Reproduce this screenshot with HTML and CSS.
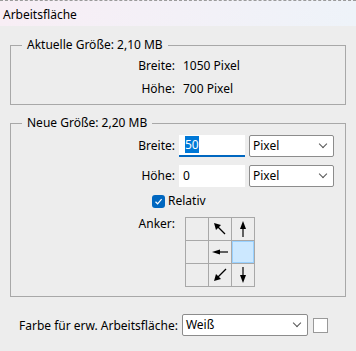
FILE: index.html
```html
<!DOCTYPE html>
<html lang="de">
<head>
	<meta charset="UTF-8">
	<title>Arbeitsfläche</title>
	<link rel="stylesheet" href="styles.css">
</head>
<body>
	<div class="titlebar">Arbeitsfläche</div>

	<div class="dialog">
		<fieldset class="groupe groupe-actuel">
			<legend>Aktuelle Größe: 2,10 MB</legend>
			<div class="lignes">
				<span class="label">Breite:</span>
				<span class="valeur">1050 Pixel</span>
				<span class="label">Höhe:</span>
				<span class="valeur">700 Pixel</span>
			</div>
		</fieldset>

		<fieldset class="groupe groupe-neu">
			<legend>Neue Größe: 2,20 MB</legend>
			<div class="lignes lignes-neu">
				<span class="label">Breite:</span>
				<div class="champs">
					<div class="saisie actif"><span class="selection">50</span></div>
					<div class="liste">Pixel<span class="chevron"></span></div>
				</div>
				<span class="label">Höhe:</span>
				<div class="champs">
					<div class="saisie">0</div>
					<div class="liste">Pixel<span class="chevron"></span></div>
				</div>
				<div class="relatif">
					<span class="case">
						<svg width="9" height="9" viewBox="0 0 9 9"><path d="M1.5 4.8 L3.6 6.8 L7.6 2.2" fill="none" stroke="#fff" stroke-width="1.2"/></svg>
					</span>
					Relativ
				</div>
				<span class="label label-anker">Anker:</span>
				<div class="anker">
					<div class="cellule"></div>
					<div class="cellule">
						<svg width="22" height="22" viewBox="0 0 22 22"><path d="M16 16 L8 8" stroke="#000" stroke-width="1.2"/><path d="M5 5 L12 7 L7 12 Z" fill="#000"/></svg>
					</div>
					<div class="cellule">
						<svg width="22" height="22" viewBox="0 0 22 22"><path d="M11 19 L11 9" stroke="#000" stroke-width="1.2"/><path d="M11 3 L14 11 L8 11 Z" fill="#000"/></svg>
					</div>
					<div class="cellule"></div>
					<div class="cellule">
						<svg width="22" height="22" viewBox="0 0 22 22"><path d="M19 11 L9 11" stroke="#000" stroke-width="1.2"/><path d="M3 11 L11 8.5 L11 13.5 Z" fill="#000"/></svg>
					</div>
					<div class="cellule centre"></div>
					<div class="cellule"></div>
					<div class="cellule">
						<svg width="22" height="22" viewBox="0 0 22 22"><path d="M17 5 L9 13" stroke="#000" stroke-width="1.2"/><path d="M5 17 L7 10 L12 15 Z" fill="#000"/></svg>
					</div>
					<div class="cellule">
						<svg width="22" height="22" viewBox="0 0 22 22"><path d="M11 3 L11 13" stroke="#000" stroke-width="1.2"/><path d="M11 19 L14 11 L8 11 Z" fill="#000"/></svg>
					</div>
				</div>
			</div>
		</fieldset>

		<div class="farbe">
			<span class="label">Farbe für erw. Arbeitsfläche:</span>
			<div class="liste liste-farbe">Weiß<span class="chevron"></span></div>
			<span class="couleur"></span>
		</div>
	</div>
</body>
</html>
```

FILE: styles.css
```css
body {
	margin: 0;
	font-family: "Noto Sans", "Open Sans", sans-serif;
	font-size: 12px;
	color: #000;
	background-color: #ededed;
	height: 351px;
	overflow: hidden;
}
.titlebar {
	height: 25px;
	line-height: 28px;
	padding-left: 3px;
	border-top: 1px dashed #9a9a9a;
	background: linear-gradient(to right, #f8eef5, #eef3f9);
}
.dialog {
	padding: 11px 10px 0 10px;
}
.groupe {
	margin: 0;
	padding: 0;
	border: 1px solid #a8a8a8;
}
.groupe legend {
	margin-left: 11px;
	padding: 0 5px;
	line-height: 16px;
}
.lignes {
	display: grid;
	grid-template-columns: 164px auto;
	column-gap: 4px;
	row-gap: 7px;
	line-height: 16px;
	padding: 5px 0 7px 0;
}
.label {
	text-align: right;
}
.valeur {
	padding-left: 4px;
}
.groupe-neu {
	margin-top: 10px;
}
.lignes-neu {
	row-gap: 8px;
	padding: 4px 0 9px 0;
	align-items: center;
}
.champs {
	display: flex;
	gap: 4px;
}
.saisie {
	width: 66px;
	height: 22px;
	line-height: 22px;
	padding-left: 4px;
	background-color: #fff;
	box-sizing: border-box;
}
.saisie.actif {
	border-bottom: 2px solid #0067c0;
	line-height: 20px;
	padding-left: 6px;
}
.selection {
	background-color: #0078d7;
	color: #fff;
}
.liste {
	position: relative;
	width: 85px;
	height: 22px;
	line-height: 20px;
	padding-left: 3px;
	border: 1px solid #8c8c8c;
	border-radius: 2px;
	background-color: #fff;
	box-sizing: border-box;
}
.chevron {
	position: absolute;
	right: 7px;
	top: 5px;
	width: 5px;
	height: 5px;
	border-right: 1px solid #555;
	border-bottom: 1px solid #555;
	transform: rotate(45deg);
}
.relatif {
	grid-column: 1 / 3;
	display: flex;
	align-items: center;
	gap: 3px;
	padding-left: 141px;
	margin-top: -2px;
}
.case {
	display: flex;
	align-items: center;
	justify-content: center;
	width: 13px;
	height: 13px;
	border-radius: 3px;
	background-color: #0067c0;
}
.label-anker {
	align-self: start;
	margin-top: -1px;
}
.anker {
	display: grid;
	grid-template-columns: repeat(3, 22px);
	grid-template-rows: repeat(3, 22px);
	gap: 1px;
	width: 68px;
	margin-left: 6px;
	padding: 1px;
	background-color: #a8a8a8;
}
.cellule {
	display: flex;
	align-items: center;
	justify-content: center;
	background-color: #ededed;
}
.cellule.centre {
	background-color: #cce8ff;
	box-shadow: inset 0 0 0 1px #99d1ff;
}
.farbe {
	display: flex;
	align-items: center;
	gap: 4px;
	margin-top: 17px;
	padding-left: 9px;
}
.liste-farbe {
	width: 126px;
	margin-right: 1px;
}
.couleur {
	width: 13px;
	height: 13px;
	border: 1px solid #999;
	background-color: #fff;
}
```
